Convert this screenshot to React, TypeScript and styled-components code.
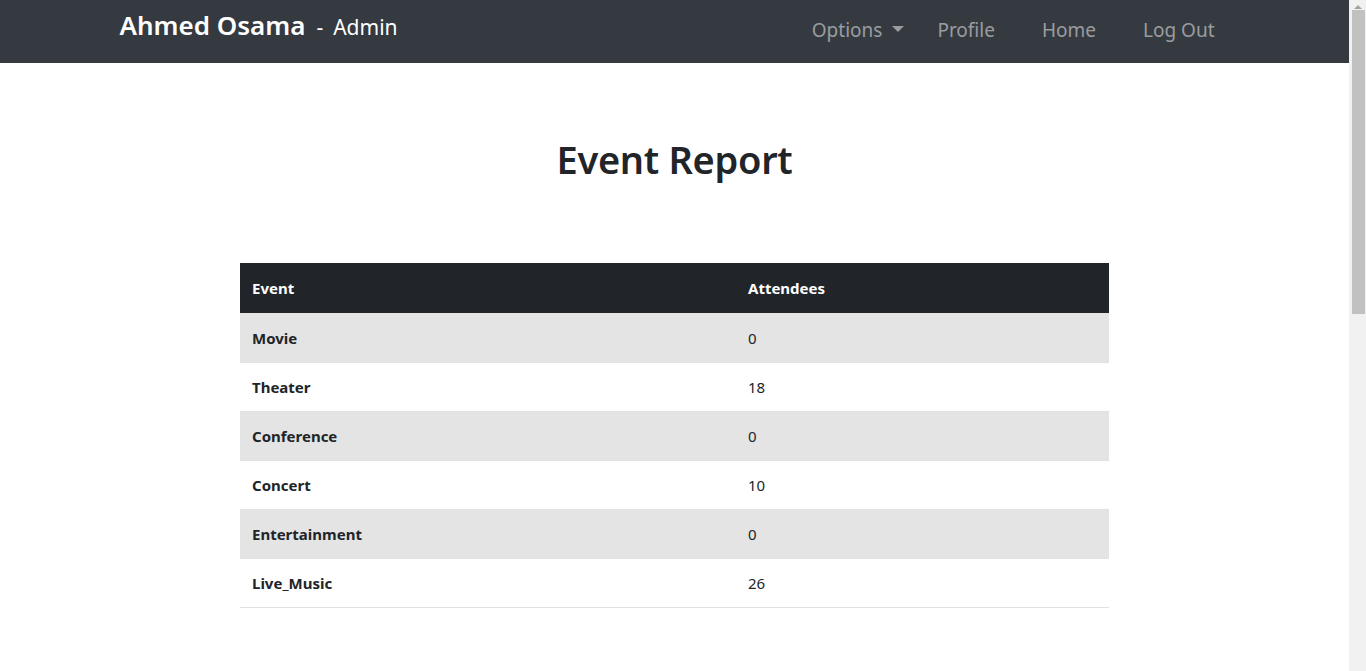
import React from "react";
import styled, { createGlobalStyle } from "styled-components";

const Global = createGlobalStyle`
  html, body { margin: 0; padding: 0; height: 100%; overflow: hidden; }
  body { font-family: "Noto Sans", "Open Sans", sans-serif; color: #212529; background: #fff; }
  * { box-sizing: border-box; }
`;

const Shell = styled.div`
  display: flex;
  height: 671px;
`;

const Page = styled.div`
  flex: 1;
  min-width: 0;
  display: flex;
  flex-direction: column;
`;

const Navbar = styled.nav`
  height: 63px;
  background: #343a40;
`;

const NavContainer = styled.div`
  max-width: 1140px;
  margin: 0 auto;
  height: 100%;
  padding: 0 15px;
  display: flex;
  align-items: center;
  justify-content: space-between;
`;

const Brand = styled.a`
  color: #fff;
  font-size: 26px;
  font-weight: 600;
  text-decoration: none;
  margin-top: -14px;
  white-space: nowrap;
  display: flex;
  align-items: baseline;
`;

const Role = styled.span`
  font-size: 21px;
  font-weight: 400;
  margin-left: 11px;
`;

const Dash = styled.span`
  margin-right: 10px;
`;

const NavList = styled.ul`
  list-style: none;
  margin: 0;
  padding: 0 15px 0 0;
  display: flex;
  align-items: center;
  gap: 47px;
  margin-top: -4px;
`;

const NavLink = styled.li<{ $toggle?: boolean }>`
  color: rgba(255, 255, 255, 0.5);
  font-size: 19px;
  display: flex;
  align-items: center;
  white-space: nowrap;
  margin-right: ${(p) => (p.$toggle ? "-14px" : "0")};
`;

const Caret = styled.span`
  display: inline-block;
  margin-left: 10px;
  margin-top: -2px;
  border-top: 6px solid rgba(255, 255, 255, 0.5);
  border-left: 6px solid transparent;
  border-right: 6px solid transparent;
`;

const Main = styled.main`
  display: flex;
  flex-direction: column;
  align-items: center;
`;

const Title = styled.h1`
  margin: 72px 0 0;
  font-size: 38px;
  font-weight: 600;
  line-height: 48px;
  color: #212529;
  letter-spacing: -0.3px;
`;

const Table = styled.table`
  width: 869px;
  margin-top: 80px;
  border-collapse: collapse;
  font-size: 15px;
`;

const HeadCell = styled.th<{ $w?: number }>`
  background: #212529;
  color: #fff;
  font-weight: 700;
  text-align: left;
  height: 50px;
  padding: 0 12px 1px;
  width: ${(p) => (p.$w ? `${p.$w}px` : "auto")};
`;

const Row = styled.tr<{ $striped: boolean }>`
  background: ${(p) => (p.$striped ? "#e4e4e4" : "#fff")};
  border-bottom: 1px solid #dee2e6;
`;

const Cell = styled.td<{ $bold?: boolean }>`
  height: 49px;
  padding: 1px 12px 0;
  font-weight: ${(p) => (p.$bold ? 700 : 400)};
  color: #212529;
`;

const ScrollTrack = styled.div`
  width: 17px;
  background: #f1f1f1;
  display: flex;
  flex-direction: column;
  align-items: center;
`;

const ScrollArrow = styled.div`
  margin-top: 5px;
  border-bottom: 4px solid #a3a3a3;
  border-left: 4px solid transparent;
  border-right: 4px solid transparent;
`;

const ScrollThumb = styled.div`
  margin-top: 1px;
  width: 13px;
  height: 304px;
  background: #c1c1c1;
  margin-left: 2px;
`;

const rows: [string, number][] = [
  ["Movie", 0],
  ["Theater", 18],
  ["Conference", 0],
  ["Concert", 10],
  ["Entertainment", 0],
  ["Live_Music", 26],
];

export default function App() {
  return (
    <>
      <Global />
      <Shell>
        <Page>
          <Navbar>
            <NavContainer>
              <Brand href="#">
                Ahmed Osama
                <Role>
                  <Dash>-</Dash>Admin
                </Role>
              </Brand>
              <NavList>
                <NavLink $toggle>
                  Options
                  <Caret />
                </NavLink>
                <NavLink>Profile</NavLink>
                <NavLink>Home</NavLink>
                <NavLink>Log Out</NavLink>
              </NavList>
            </NavContainer>
          </Navbar>
          <Main>
            <Title>Event Report</Title>
            <Table>
              <thead>
                <tr>
                  <HeadCell $w={496}>Event</HeadCell>
                  <HeadCell>Attendees</HeadCell>
                </tr>
              </thead>
              <tbody>
                {rows.map(([name, n], i) => (
                  <Row key={name} $striped={i % 2 === 0}>
                    <Cell $bold>{name}</Cell>
                    <Cell>{n}</Cell>
                  </Row>
                ))}
              </tbody>
            </Table>
          </Main>
        </Page>
        <ScrollTrack>
          <ScrollArrow />
          <ScrollThumb />
        </ScrollTrack>
      </Shell>
    </>
  );
}
